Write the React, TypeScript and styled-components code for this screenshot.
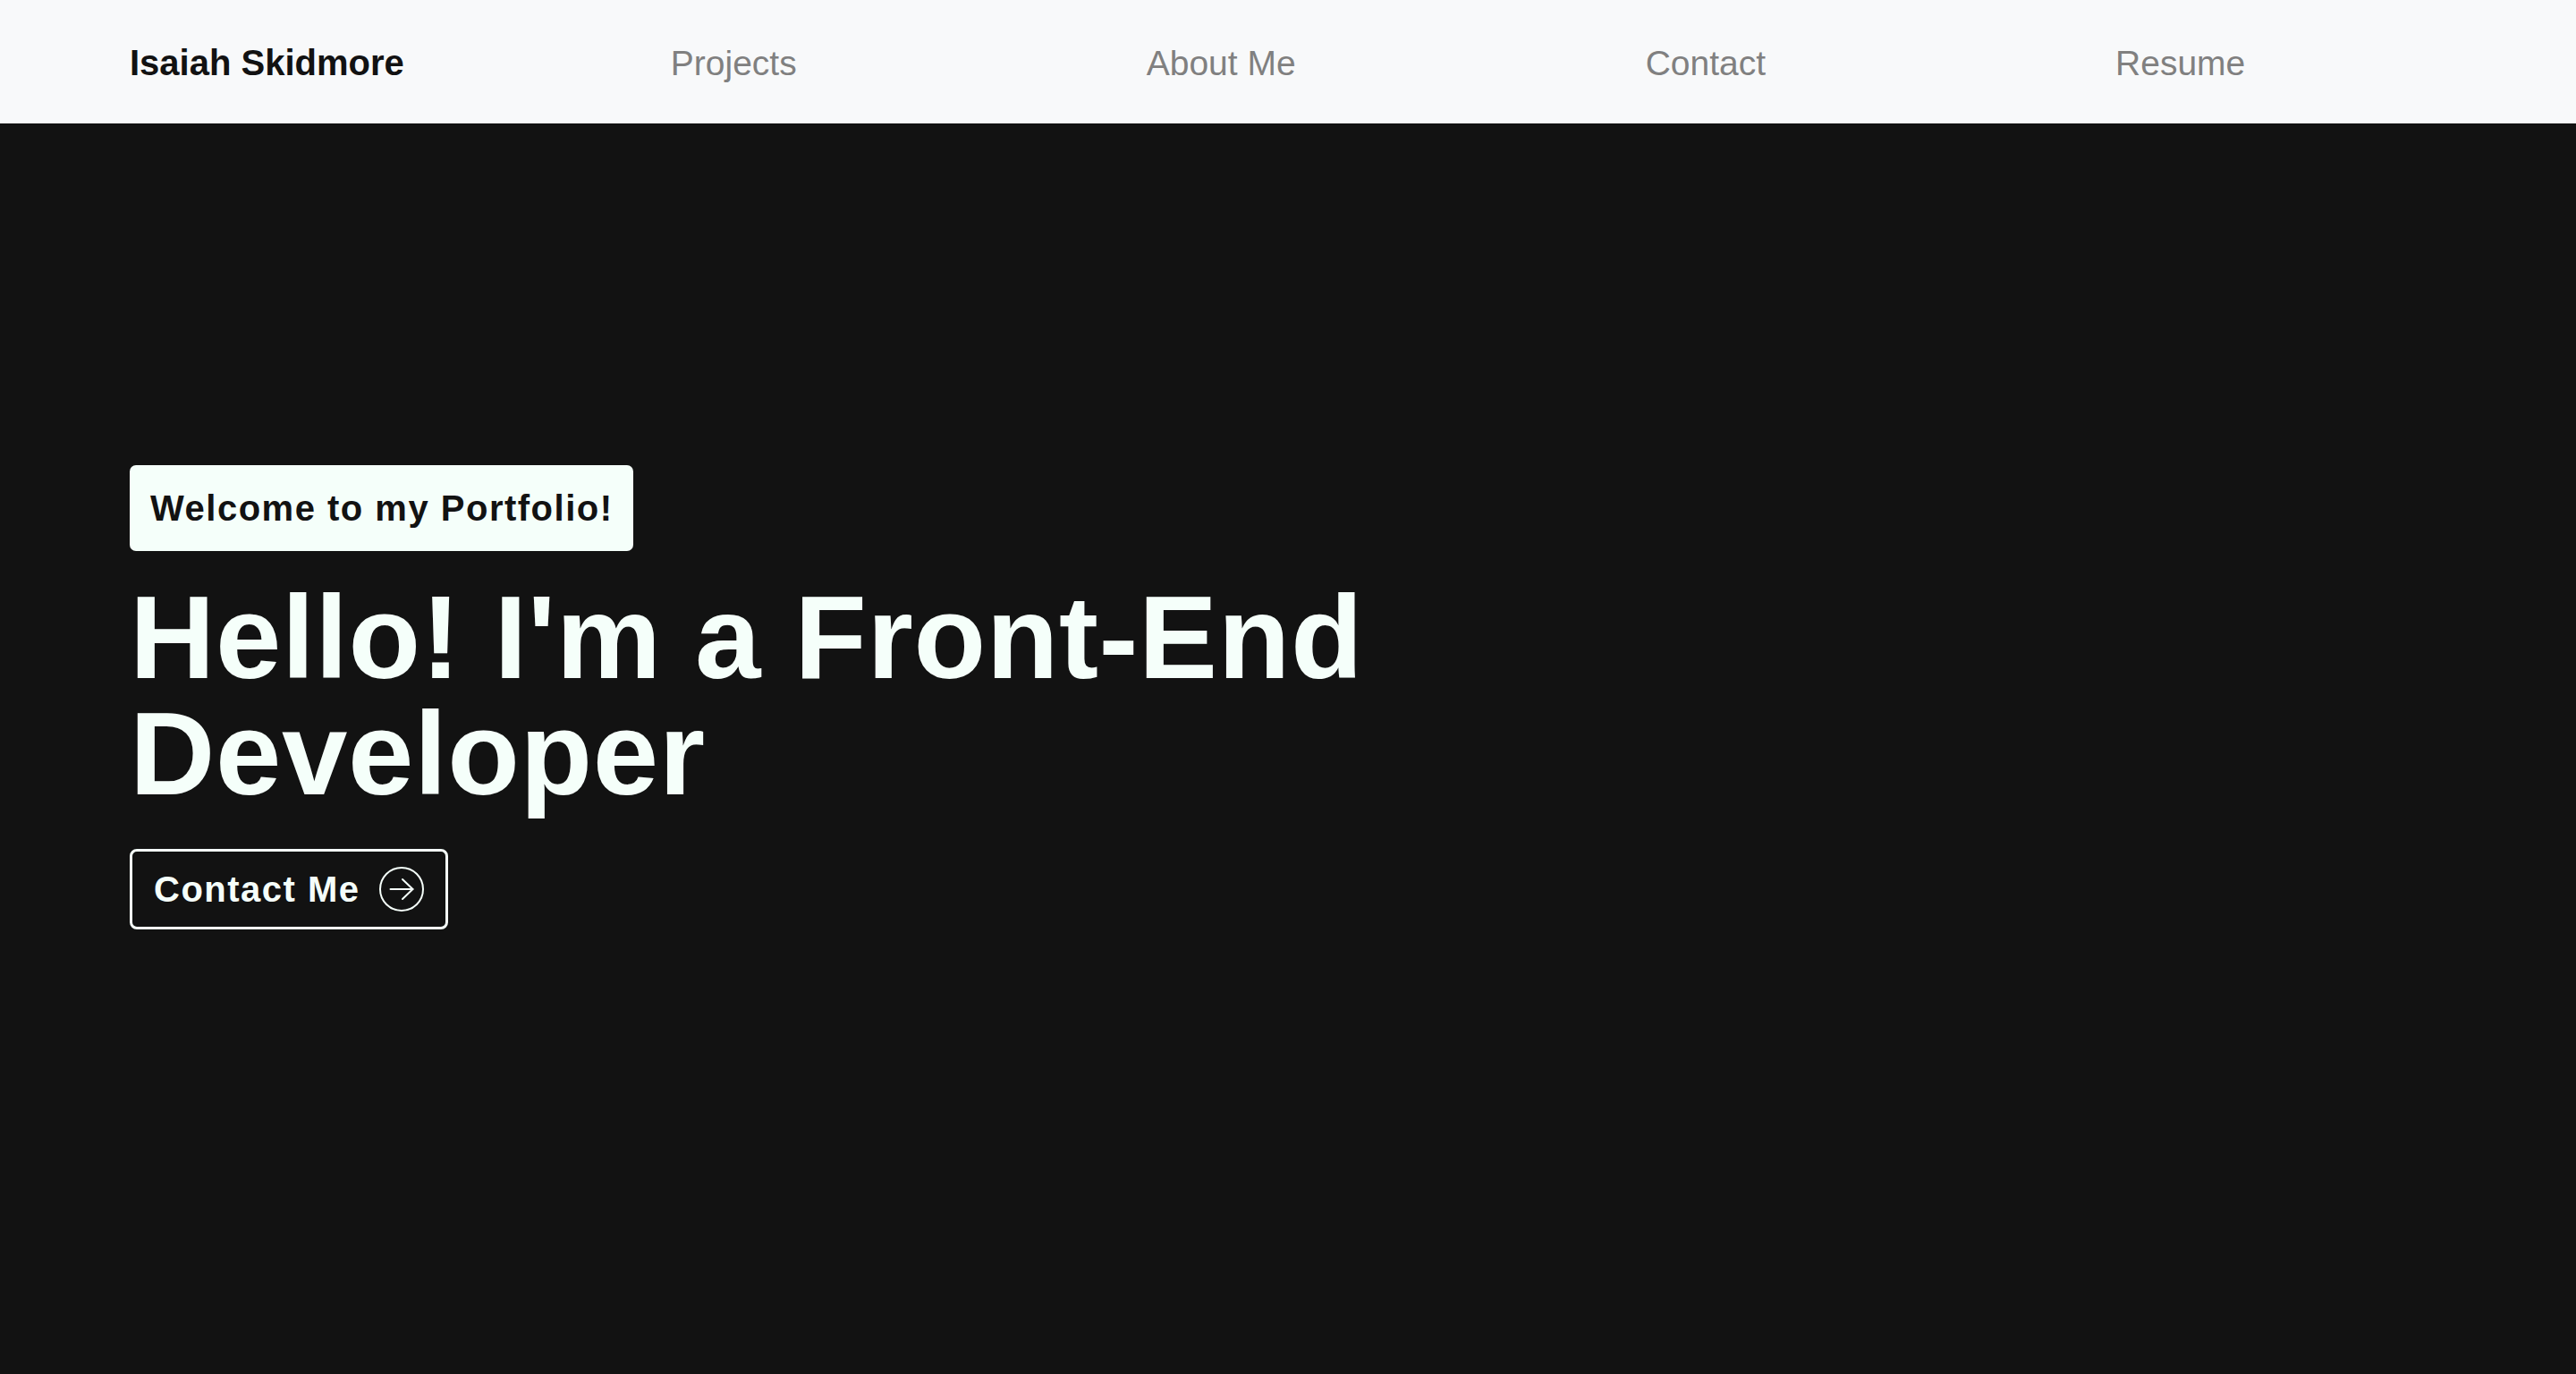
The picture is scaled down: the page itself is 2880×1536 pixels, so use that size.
import React from "react";
import styled, { createGlobalStyle } from "styled-components";

const GlobalStyle = createGlobalStyle`
  html, body {
    margin: 0;
    padding: 0;
    background: #121212;
    font-family: "Liberation Sans", Arial, Helvetica, sans-serif;
  }
  * { box-sizing: border-box; }
`;

const Page = styled.div`
  min-height: 100vh;
  display: flex;
  flex-direction: column;
  background: #121212;
`;

const Header = styled.header`
  height: 138px;
  flex-shrink: 0;
  background: #f8f9fa;
  display: flex;
  align-items: center;
  padding: 3px 145px 0;
`;

const Logo = styled.a`
  font-size: 40px;
  font-weight: 700;
  color: #121212;
  text-decoration: none;
  white-space: nowrap;
`;

const NavLinks = styled.nav`
  display: flex;
  align-items: center;
  gap: 391px;
  margin-left: 298px;
`;

const NavLink = styled.a`
  font-size: 39px;
  font-weight: 400;
  color: #808080;
  text-decoration: none;
  white-space: nowrap;
`;

const Hero = styled.main`
  flex: 1;
  padding: 382px 145px 0;
  display: flex;
  flex-direction: column;
  align-items: flex-start;
`;

const Badge = styled.div`
  height: 96px;
  line-height: 96px;
  padding: 0 22px 0 23px;
  background: #f5fffa;
  color: #121212;
  border-radius: 7px;
  font-size: 40px;
  font-weight: 700;
  letter-spacing: 1.5px;
  white-space: nowrap;
`;

const Headline = styled.h1`
  margin: 32px 0 0;
  max-width: 1460px;
  font-size: 132px;
  line-height: 130px;
  font-weight: 700;
  letter-spacing: 0.6px;
  color: #f5fffa;
`;

const ContactButton = styled.button`
  margin-top: 41px;
  display: inline-flex;
  align-items: center;
  gap: 21px;
  padding: 17px 24px;
  background: transparent;
  border: 3px solid #f5fffa;
  border-radius: 8px;
  color: #f5fffa;
  font-family: inherit;
  font-size: 40px;
  font-weight: 700;
  letter-spacing: 1.5px;
  cursor: pointer;
`;

const ArrowIcon = () => (
  <svg width="50" height="50" viewBox="0 0 50 50" fill="none" stroke="#f5fffa" strokeWidth="2" strokeLinecap="round" strokeLinejoin="round">
    <circle cx="25" cy="25" r="24" />
    <path d="M12.5 25H37.5" />
    <path d="M26 14L37.5 25L26 36" />
  </svg>
);

export default function App() {
  return (
    <>
      <GlobalStyle />
      <Page>
        <Header>
          <Logo href="#">Isaiah Skidmore</Logo>
          <NavLinks>
            <NavLink href="#">Projects</NavLink>
            <NavLink href="#">About Me</NavLink>
            <NavLink href="#">Contact</NavLink>
            <NavLink href="#">Resume</NavLink>
          </NavLinks>
        </Header>
        <Hero>
          <Badge>Welcome to my Portfolio!</Badge>
          <Headline>Hello! I'm a Front-End Developer</Headline>
          <ContactButton>
            Contact Me
            <ArrowIcon />
          </ContactButton>
        </Hero>
      </Page>
    </>
  );
}
